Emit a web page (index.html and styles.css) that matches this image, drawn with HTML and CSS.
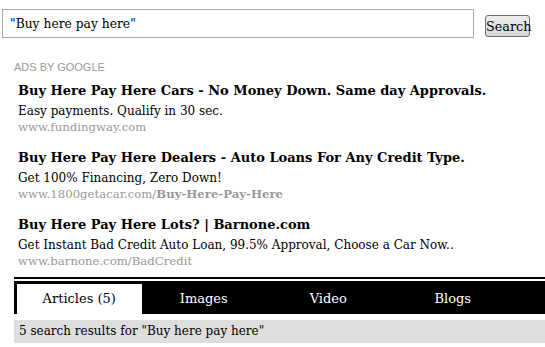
FILE: index.html
```html
<!DOCTYPE html>
<html>
<head>
<meta charset="utf-8">
<link rel="stylesheet" href="styles.css">
</head>
<body>
<form class="search">
  <input class="search-input" type="text" value="&quot;Buy here pay here&quot;">
  <button class="search-btn" type="button">Search</button>
</form>
<div class="content">
  <div class="ads-label">ADS BY GOOGLE</div>
  <div class="ads">
    <div class="ad">
      <div class="ad-title">Buy Here Pay Here Cars - No Money Down. Same day Approvals.</div>
      <div class="ad-desc">Easy payments. Qualify in 30 sec.</div>
      <div class="ad-url">www.fundingway.com</div>
    </div>
    <div class="ad">
      <div class="ad-title">Buy Here Pay Here Dealers - Auto Loans For Any Credit Type.</div>
      <div class="ad-desc">Get 100% Financing, Zero Down!</div>
      <div class="ad-url">www.1800getacar.com/<b>Buy-Here-Pay-Here</b></div>
    </div>
    <div class="ad">
      <div class="ad-title">Buy Here Pay Here Lots? | Barnone.com</div>
      <div class="ad-desc">Get Instant Bad Credit Auto Loan, 99.5% Approval, Choose a Car Now..</div>
      <div class="ad-url">www.barnone.com/BadCredit</div>
    </div>
  </div>
  <div class="rule"></div>
  <div class="tabs">
    <div class="tab active">Articles (5)</div>
    <div class="tab">Images</div>
    <div class="tab">Video</div>
    <div class="tab">Blogs</div>
  </div>
  <div class="results">5 search results for "Buy here pay here"</div>
</div>
</body>
</html>
```
FILE: styles.css
```css
html, body { margin: 0; padding: 0; background: #fff; }
body { font-family: "DejaVu Serif", Georgia, serif; color: #000; }
.search { display: flex; align-items: flex-start; padding: 9px 0 0 2px; margin: 0; }
.search-input {
  box-sizing: border-box; width: 472px; height: 29px;
  border: 1px solid #a9a9a9; padding: 0 7px; margin: 0;
  font-family: "DejaVu Serif", serif; font-size: 12.3px; color: #000;
  outline: none;
}
.search-btn {
  box-sizing: border-box; margin: 6px 0 0 11px; width: 45px; height: 22px;
  padding: 0; border: 1px solid #707070; border-radius: 3px;
  background: linear-gradient(#ececec, #d8d8d8);
  font-family: "DejaVu Serif", serif; font-size: 12.8px; color: #000;
}
.content { padding: 23px 0 0 14px; }
.ads-label { font-family: "Liberation Sans", Arial, sans-serif; font-size: 11px; color: #999; line-height: 13px; margin-bottom: 6px; }
.ads { display: flex; flex-direction: column; gap: 13px; margin-bottom: 9px; }
.ad { padding-left: 4px; }
.ad-title { font-weight: bold; font-size: 13px; line-height: 22px; }
.ad-desc { font-size: 12px; line-height: 19px; }
.ad-url { font-size: 11.7px; line-height: 13px; color: #999; }
.ad-url b { color: #999; }
.rule { height: 2px; background: #000; }
.tabs { display: flex; background: #000; margin-top: 2px; padding: 3px 0 0 3px; height: 30px; }
.tab { width: 124.5px; text-align: center; color: #fff; font-size: 13px; line-height: 30px; }
.tab.active { background: #fff; color: #000; }
.results { background: #dedede; margin-top: 6px; height: 23px; line-height: 23px; padding-left: 5px; font-size: 12px; }
```
